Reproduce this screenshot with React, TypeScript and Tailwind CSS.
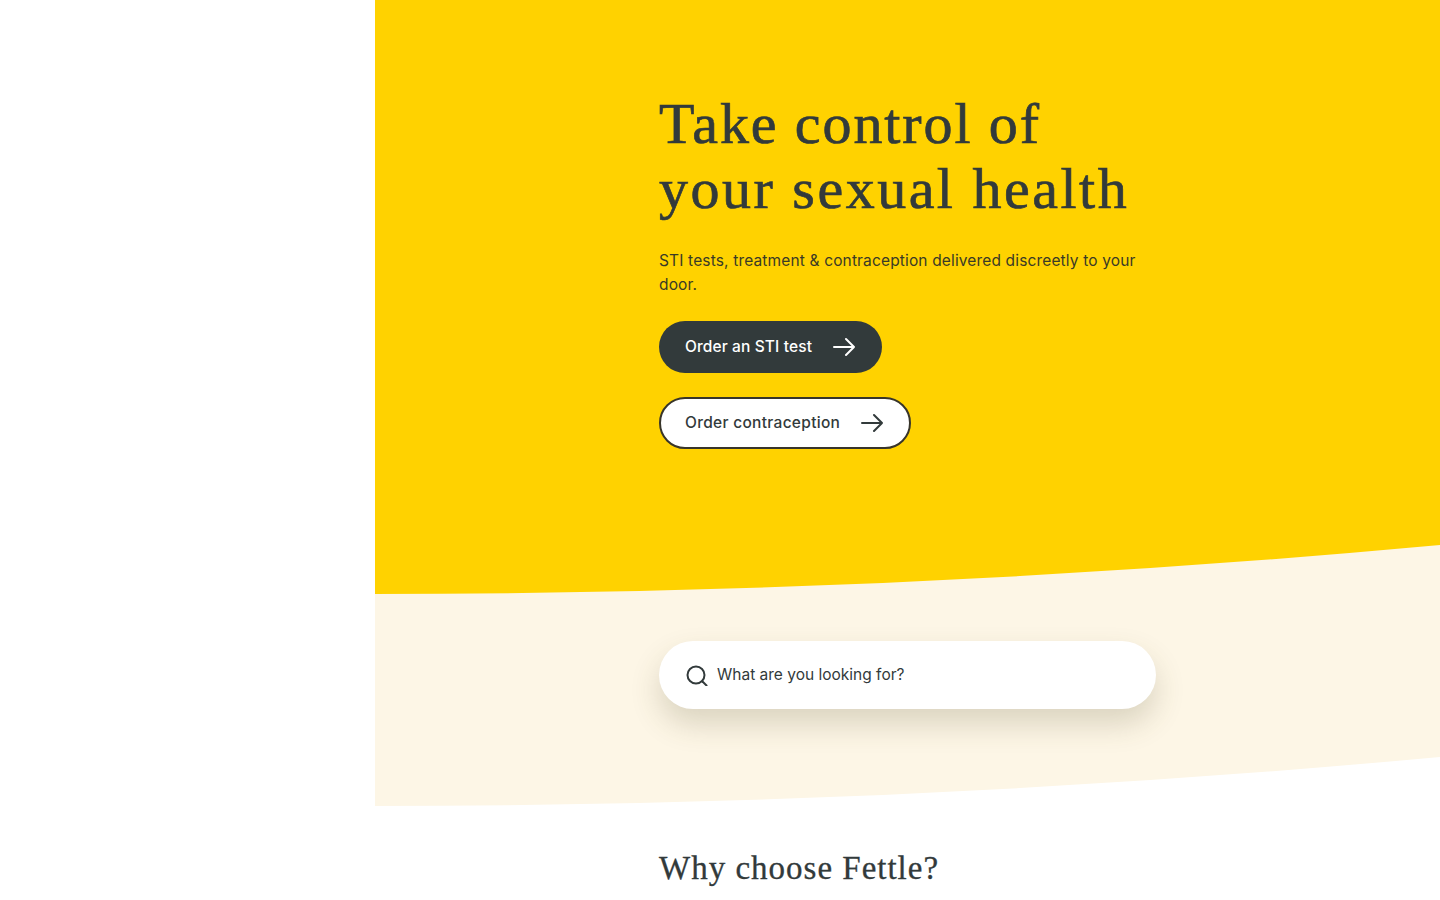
const serif = "font-['Liberation_Serif',serif]";

function WaveEdge({ fill }: { fill: string }) {
  return (
    <svg
      className="absolute bottom-0 left-0 w-full h-[50px]"
      viewBox="0 0 1065 50"
      preserveAspectRatio="none"
      fill={fill}>
      <path d="M0 50 Q532.5 50 1065 1 V50 Z" />
    </svg>
  );
}

function Arrow() {
  return (
    <svg
      className="w-[22px] h-[22px] shrink-0"
      viewBox="0 0 22 22"
      fill="none"
      stroke="currentColor"
      strokeWidth={2}
      strokeLinecap="round"
      strokeLinejoin="round">
      <path d="M1 11H21M13 3l8 8-8 8" />
    </svg>
  );
}

export default function App() {
  return (
    <div className="flex h-screen overflow-hidden bg-white text-[#323a3b] font-['Inter','Noto_Sans',sans-serif]">
      <div className="w-[375px] shrink-0" />

      <main className="flex-1 min-w-0">
        {/* Hero */}
        <section className="relative h-[594px] bg-[#ffd200] pl-[284px] pt-[91px]">
          <h1 className={`${serif} text-[58px] leading-[65px] [-webkit-text-stroke:0.7px_#323a3b]`}>
            <span className="tracking-[1.9px]">Take control of</span>
            <br />
            <span className="tracking-[2.5px]">your sexual health</span>
          </h1>
          <p className="w-[497px] mt-[28px] text-[15.5px] leading-[24px] tracking-[0.15px] text-[#3a3a26]">
            STI tests, treatment &amp; contraception delivered discreetly to your door.
          </p>
          <div className="flex flex-col items-start gap-[24px] mt-[24px]">
            <a className="flex items-center gap-[21px] h-[52px] pl-[26px] pr-[27px] rounded-full bg-[#323a3b] text-white text-[15.5px] font-medium tracking-[0.12px]">
              Order an STI test
              <Arrow />
            </a>
            <a className="flex items-center gap-[21px] h-[52px] pl-[24px] pr-[26px] rounded-full bg-white border-2 border-[#38352a] text-[15.5px] font-medium tracking-[0.3px]">
              Order contraception
              <Arrow />
            </a>
          </div>
          <WaveEdge fill="#fdf6e6" />
        </section>

        {/* Search */}
        <section className="relative h-[212px] bg-[#fdf6e6] pl-[284px] pt-[47px]">
          <div className="flex items-center gap-[9px] w-[497px] h-[68px] pl-[27px] rounded-full bg-white shadow-[0_15px_30px_rgba(80,75,40,0.2)] text-[15.5px]">
            <svg
              className="w-[22px] h-[22px] shrink-0"
              viewBox="0 0 22 22"
              fill="none"
              stroke="currentColor"
              strokeWidth={2}
              strokeLinecap="round">
              <circle cx="10" cy="11" r="8.5" />
              <path d="M16.5 17.5L20.5 21.5" />
            </svg>
            What are you looking for?
          </div>
          <WaveEdge fill="#ffffff" />
        </section>

        <section className="pl-[284px] pt-[43px]">
          <h2 className={`${serif} text-[33px] leading-[38px] tracking-[1px] [-webkit-text-stroke:0.3px_#323a3b]`}>
            Why choose Fettle?
          </h2>
        </section>
      </main>
    </div>
  );
}
